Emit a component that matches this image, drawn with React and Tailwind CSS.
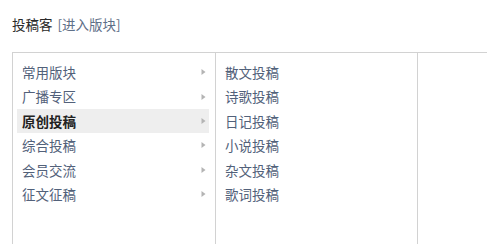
import { Fragment } from "react";

const boards = ["常用版块", "广播专区", "原创投稿", "综合投稿", "会员交流", "征文征稿"];
const subs = ["散文投稿", "诗歌投稿", "日记投稿", "小说投稿", "杂文投稿", "歌词投稿"];

function Arrow() {
  return (
    <svg width="5" height="8" viewBox="0 0 5 8" className="shrink-0">
      <path d="M0.5 1 L4.5 4 L0.5 7 Z" fill="#b4b4b4" />
    </svg>
  );
}

export default function App() {
  const active = "原创投稿";

  return (
    <div
      className="w-[487px] h-[244px] overflow-hidden bg-white px-3"
      style={{ fontFamily: '"Microsoft YaHei", "Noto Sans CJK SC", sans-serif' }}
    >
      {/* 标题 */}
      <div className="pt-[15px] h-[52px] text-[13.5px] leading-[18px]">
        <span className="text-[#2a2a2a]">投稿客</span>
        <span className="ml-[5px] text-[#5f7088]">[进入版块]</span>
      </div>

      {/* 版块选择框 */}
      <div className="flex h-[300px] border-t border-l border-[#d2d2d2] mr-[-12px]">
        <div className="w-[203px] shrink-0 border-r border-[#d2d2d2] pt-[7px] pl-[4px] pr-[6px]">
          {boards.map((b) => (
            <div
              key={b}
              className={`flex items-center justify-between h-[24.4px] pl-[5px] pr-[3px] text-[13.5px] ${
                b === active ? "bg-[#eeeeee] font-bold text-[#222]" : "text-[#52617a]"
              }`}
            >
              <span>{b}</span>
              <Arrow />
            </div>
          ))}
        </div>
        <div className="w-[202px] shrink-0 border-r border-[#d2d2d2] pt-[7px] pl-[9px]">
          {subs.map((s) => (
            <Fragment key={s}>
              <div className="flex items-center h-[24.4px] text-[13.5px] text-[#52617a]">{s}</div>
            </Fragment>
          ))}
        </div>
        <div className="flex-1" />
      </div>
    </div>
  );
}
